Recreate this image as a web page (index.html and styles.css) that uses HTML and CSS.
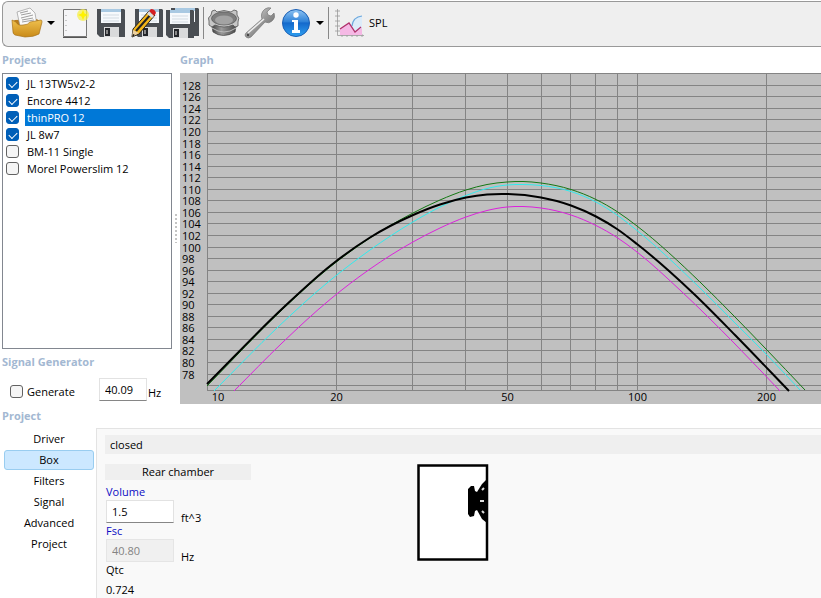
FILE: index.html
```
<!DOCTYPE html>
<html lang="en">

<head>
  <meta charset="UTF-8">
  <meta name="viewport" content="width=device-width">
  <title>Speaker projects</title>
  <link rel="stylesheet" href="styles.css">
</head>

<body>
  <header class="toolbar">
    <button class="tool" aria-label="Open">
      <svg width="34" height="32" viewBox="0 0 34 32">
        <defs>
          <linearGradient id="folder" x1="0" y1="0" x2="0" y2="1"><stop offset="0" stop-color="#efc04e"/><stop offset="1" stop-color="#c98a18"/></linearGradient>
          <linearGradient id="metal" x1="0" y1="0" x2="1" y2="1"><stop offset="0" stop-color="#eee"/><stop offset=".5" stop-color="#999"/><stop offset="1" stop-color="#555"/></linearGradient>
          <linearGradient id="blue" x1="0" y1="0" x2="0" y2="1"><stop offset="0" stop-color="#8fc4f2"/><stop offset=".45" stop-color="#2f82d8"/><stop offset=".5" stop-color="#1469cc"/><stop offset="1" stop-color="#2fa0f0"/></linearGradient>
          <linearGradient id="steel" x1="0" y1="0" x2="1" y2="0"><stop offset="0" stop-color="#3a3a3a"/><stop offset=".4" stop-color="#9a9a9a"/><stop offset="1" stop-color="#444"/></linearGradient>
        </defs>
        <path d="M5 13L3 14V26H29V14L27 12Z" fill="#b87c1c"/>
        <path d="M10 19L7 5L20 1L25 6L27 18Z" fill="#fafafa" stroke="#999" stroke-width=".7"/>
        <path d="M10 6L18 4M11 8L21 6M11 11L23 8M12 13L23 11M12 15L24 13" stroke="#888" stroke-width=".8"/>
        <path d="M2 13L6 15Q8 19 13 18Q18 18 20 15L31 13Q32 13 32 15L29 27Q24 30 15 30L5 28Q3 27 3 25Z" fill="url(#folder)" stroke="#a8731a" stroke-width=".7"/>
      </svg>
    </button>
    <button class="drop" aria-label="Recent files"></button>
    <button class="tool" aria-label="New">
      <svg width="30" height="32" viewBox="0 0 30 32">
        <path d="M3.500 2.500H26.500V29.500H3.500Z" fill="#f5f5f7" stroke="#777"/>
        <path d="M3 30.500H27" stroke="#555"/>
        <path d="M6 8v1M6 13v1M6 18v1M6 23v1" stroke="#999"/>
        <circle cx="23" cy="8" r="6" fill="#f6ef4c" opacity=".75"/>
        <path d="M23 3l1.500 3.500L28 8l-3.500 1.500L23 13l-1.500-3.500L18 8l3.500-1.500Z" fill="#fff200"/>
      </svg>
    </button>
    <button class="tool" aria-label="Save">
      <svg width="32" height="32" viewBox="0 0 32 32">
        <symbol id="disk" viewBox="0 0 28 30">
          <path d="M0 1H27L28 2V29H3L0 26Z" fill="#4a4e53"/>
          <path d="M4 1H24V15H4Z" fill="#f6f9fc"/>
          <path d="M4 1H24V4H4Z" fill="#a9c9e2"/>
          <path d="M6 7H22M6 10H22M6 13H22" stroke="#d3dbe2"/>
          <path d="M7 19H22V29H7Z" fill="#d9dadb"/>
          <path d="M8 20H13V28H8Z" fill="#24262a"/>
          <path d="M9 22H11V26H9Z" fill="#888"/>
        </symbol>
        <use href="#disk" x="2" y="1" width="28" height="30"/>
      </svg>
    </button>
    <button class="tool" aria-label="Save as">
      <svg width="36" height="32" viewBox="0 0 36 32">
        <use href="#disk" x="6" y="1" width="28" height="30"/>
        <path d="M3 30L4 22L20 4L26 8L10 27Z" fill="#f3b519" stroke="#222"/>
        <path d="M7 24L23 6" stroke="#222" stroke-width="2"/>
        <path d="M20 4L22 2Q26 2 27 6L25 9Z" fill="#d51f22"/>
        <path d="M18 7L20 4L25 9L23 11Z" fill="#ddd"/>
        <path d="M3 30L4 23L10 26Z" fill="#ecd0a0"/>
        <path d="M3 30L4 27L6 28Z" fill="#111"/>
      </svg>
    </button>
    <button class="tool" aria-label="Save all">
      <svg width="36" height="34" viewBox="0 0 36 34">
        <use href="#disk" x="6" y="1" width="28" height="30"/>
        <use href="#disk" x="1" y="3" width="28" height="30"/>
      </svg>
    </button>
    <span class="separator"></span>
    <button class="tool" aria-label="Drivers">
      <svg width="34" height="32" viewBox="0 0 34 32">
        <path d="M4 14L6 25Q16 32 28 25L30 14Z" fill="url(#steel)" stroke="#444" stroke-width=".7"/>
        <path d="M5 21Q17 29 29 21" fill="none" stroke="#bbb"/>
        <path d="M5 4L8 3L10 5Q17 2 24 5L27 3L30 4L30 8Q33 11 31 15L31 19L28 20L26 18Q17 22 8 18L5 20L2 18L2 14Q0 11 4 8Z" fill="#c6c6c6" stroke="#555" stroke-width=".8"/>
        <ellipse cx="17" cy="11.500" rx="12.500" ry="6.500" fill="#7e7e7e" stroke="#555" stroke-width=".7"/>
        <ellipse cx="17" cy="13" rx="9" ry="4.500" fill="#a3a3a3"/>
      </svg>
    </button>
    <button class="tool" aria-label="Settings">
      <svg width="34" height="34" viewBox="0 0 34 34">
        <path d="M3 27L19 13Q17 7 22 3Q25 1 28 2L24 6L25 9L28 10L31 7Q33 12 29 15Q26 18 22 16L8 31Q5 33 3 31Q1 29 3 27Z" fill="url(#metal)" stroke="#777" stroke-width=".7"/>
        <path d="M5 27L21 13" stroke="#eee" stroke-width="1.500"/>
        <circle cx="5" cy="29" r="1.200" fill="#444"/>
      </svg>
    </button>
    <button class="tool" aria-label="About">
      <svg width="34" height="32" viewBox="0 0 34 32">
        <circle cx="17" cy="16" r="13.500" fill="url(#blue)" stroke="#1b5fb4"/>
        <circle cx="17" cy="8" r="2.700" fill="#fff"/>
        <path d="M13 13H19V23H21V26H13V23H15V15H13Z" fill="#fff"/>
      </svg>
    </button>
    <button class="drop" aria-label="Help topics"></button>
    <span class="separator"></span>
    <button class="tool tool-text">
      <svg width="30" height="30" viewBox="0 0 30 30">
        <path d="M2.500 1V27.500H29M0 3h5M0 8h5M0 13h5M0 18h5M0 23h5M7 26v3M12 26v3M17 26v3M22 26v3M27 26v3" stroke="#999" fill="none" stroke-width=".8"/>
        <path d="M15 18Q17 9 27 8V21L21 24Z" fill="#dcecfa"/>
        <path d="M17 18Q18 9 27 8" fill="none" stroke="#6ba7dc" stroke-width="1.200"/>
        <path d="M5 21L14 15L20 24L27 20V27H5Z" fill="#f5b9e5"/>
        <path d="M5 21L14 15L20 24L26 19" fill="none" stroke="#b0306c" stroke-width="1.300"/>
      </svg>
      SPL
    </button>
  </header>

  <main class="workspace">
    <section class="sidebar">
      <h2 class="heading">Projects</h2>
      <ul class="project-list">
        <li><label><input type="checkbox" class="check" checked><span>JL 13TW5v2-2</span></label></li>
        <li><label><input type="checkbox" class="check" checked><span>Encore 4412</span></label></li>
        <li class="selected"><label><input type="checkbox" class="check" checked><span>thinPRO 12</span></label></li>
        <li><label><input type="checkbox" class="check" checked><span>JL 8w7</span></label></li>
        <li><label><input type="checkbox" class="check"><span>BM-11 Single</span></label></li>
        <li><label><input type="checkbox" class="check"><span>Morel Powerslim 12</span></label></li>
      </ul>
      <h2 class="heading">Signal Generator</h2>
      <div class="generator">
        <label class="generate"><input type="checkbox" class="check"><span>Generate</span></label>
        <input type="text" class="field" value="40.09" aria-label="Frequency">
        <span class="unit">Hz</span>
      </div>
    </section>
    <div class="splitter"></div>
    <section class="graph">
      <h2 class="heading">Graph</h2>
      <svg class="plot" id="plot" viewBox="0 0 641 331" role="img" aria-label="SPL graph"></svg>
    </section>
  </main>

  <section class="project">
    <h2 class="heading">Project</h2>
    <div class="project-body">
      <nav class="tabs">
        <button class="tab">Driver</button>
        <button class="tab active">Box</button>
        <button class="tab">Filters</button>
        <button class="tab">Signal</button>
        <button class="tab">Advanced</button>
        <button class="tab">Project</button>
      </nav>
      <div class="panel">
        <div class="box-type">closed</div>
        <div class="box-content">
          <div class="chamber">
            <h3 class="chamber-title">Rear chamber</h3>
            <label class="param" for="volume">Volume</label>
            <div class="param-row">
              <input type="text" class="field" id="volume" value="1.5">
              <span class="unit">ft^3</span>
            </div>
            <label class="param" for="fsc">Fsc</label>
            <div class="param-row">
              <input type="text" class="field" id="fsc" value="40.80" disabled>
              <span class="unit">Hz</span>
            </div>
            <div class="result">Qtc</div>
            <div class="result-value">0.724</div>
          </div>
          <svg class="enclosure" width="72" height="97" viewBox="0 0 72 97">
            <rect x="1.500" y="1.500" width="68.500" height="94" fill="#fff" stroke="#000" stroke-width="2.500"/>
            <path d="M54 22H57L58 27L60 28L65 20L70 15V59L65 55L60 46L58 47L57 52L53 53L51 50V25Z"/>
            <path d="M65 26l2-2M63 37l4 0M65 47l2 2" stroke="#ddd" stroke-width="2"/>
          </svg>
        </div>
      </div>
    </div>
  </section>
  <script src="plot.js"></script>
</body>

</html>
```
FILE: styles.css
```
* {
  box-sizing: border-box;
}

html,
body {
  margin: 0;
  height: 100%;
}

body {
  display: flex;
  flex-direction: column;
  overflow: hidden;
  background: #fff;
  color: #000;
  font-family: 'Open Sans', 'Noto Sans', sans-serif;
  font-size: 11px;
  line-height: 16px;
  --heading: #a3b8d2;
  --grey: #efefef;
  --link: #0c0cc4;
}

button,
input {
  font: inherit;
  color: inherit;
}

.toolbar {
  display: flex;
  align-items: center;
  flex: none;
  height: 46px;
  margin: 1px 0 0 2px;
  padding: 0 0 2px 6px;
  background: var(--grey);
  border: 1px solid #999;
  border-right: 0;
  border-radius: 6px 0 0 6px;
}

.tool {
  display: flex;
  align-items: center;
  justify-content: center;
  width: 36px;
  padding: 0;
  border: 0;
  background: none;
}

.tool-text {
  gap: 4px;
  width: auto;
  padding-left: 4px;
}

.drop {
  width: 12px;
  height: 30px;
  padding: 0;
  border: 0;
  background: none;
}

.drop::before {
  content: '';
  display: block;
  width: 0;
  margin: auto;
  border: 4px solid transparent;
  border-top-color: #000;
  border-bottom: 0;
}

.separator {
  width: 1px;
  height: 32px;
  margin: 0 2px;
  background: #888;
}

.heading {
  margin: 0;
  color: var(--heading);
  font-size: 11px;
  font-weight: 700;
  line-height: 16px;
}

.workspace {
  display: grid;
  grid-template-columns: 170px 8px 1fr;
  flex: none;
  padding: 5px 0 0 2px;
}

.sidebar,
.graph {
  display: flex;
  flex-direction: column;
}

.sidebar .heading,
.graph .heading {
  margin-bottom: 5px;
}

.project-list {
  flex: 1;
  margin: 0 0 5px;
  padding: 1px;
  list-style: none;
  border: 1px solid #828790;
}

.project-list label,
.generate {
  display: flex;
  align-items: center;
}

.project-list span {
  flex: 1;
  height: 17px;
  margin-left: 6px;
  padding-left: 2px;
  line-height: 17px;
}

.project-list .check {
  margin-left: 2px;
}

.selected span {
  background: #0078d7;
  color: #fff;
}

.check {
  appearance: none;
  display: grid;
  place-items: center;
  width: 13px;
  height: 13px;
  margin: 0;
  background: #f5f5f5;
  border: 1px solid #626262;
  border-radius: 3px;
}

.check:checked {
  background: #005fb8;
  border-color: #005fb8;
}

.check:checked::before {
  content: '';
  width: 7px;
  height: 4px;
  border: solid #fff;
  border-width: 0 0 1px 1px;
  transform: rotate(-45deg);
}

.generator {
  display: flex;
  align-items: center;
  height: 29px;
}

.generate {
  gap: 4px;
  width: 97px;
  padding: 4px 0 0 8px;
}

.field {
  width: 68px;
  height: 23px;
  padding: 0 5px 1px;
  background: #fff;
  border: 1px solid #e2e2e2;
  border-bottom-color: #868686;
}

.field:disabled {
  background: #f0f0f0;
  border-color: #e5e5e5;
  color: #838383;
}

.generator .field {
  width: 48px;
}

.generator .unit {
  padding: 6px 0 0 1px;
}

.splitter {
  align-self: center;
  height: 30px;
  margin: 0 2px;
  background: radial-gradient(circle, #c4c4c4 1px, transparent 1px) 0 0 / 4px 4px;
}

.plot {
  display: block;
  width: 100%;
  height: auto;
  overflow: visible;
  background: #c0c0c0;
}

.grid line {
  stroke: #848484;
}

.curve {
  fill: none;
  stroke-width: 1;
}

.curve.green {
  stroke: #147814;
}

.curve.cyan {
  stroke: #30ecee;
}

.curve.magenta {
  stroke: #dc22dc;
}

.curve.black {
  stroke: #000;
  stroke-width: 2;
}

.frequency {
  text-anchor: middle;
}

.project {
  display: flex;
  flex-direction: column;
  flex: 1;
  padding-top: 4px;
}

.project > .heading {
  margin-left: 2px;
}

.project-body {
  display: flex;
  flex: 1;
  margin-top: 4px;
}

.tabs {
  display: flex;
  flex-direction: column;
  gap: 1px;
  width: 96px;
  padding: 1px 2px 0 4px;
}

.tab {
  height: 20px;
  padding: 0;
  background: none;
  border: 1px solid transparent;
  border-radius: 3px;
  line-height: 16px;
}

.tab.active {
  background: #cce8ff;
  border-color: #99cdf0;
}

.panel {
  flex: 1;
  padding: 6px 0 0 8px;
  background: #f9f9f9;
  border: solid #e3e3e3;
  border-width: 1px 0 0 1px;
}

.box-type {
  padding: 1px 5px;
  background: var(--grey);
  line-height: 17px;
}

.box-content {
  display: flex;
  align-items: flex-start;
  gap: 166px;
  margin-top: 10px;
}

.chamber {
  width: 146px;
}

.chamber-title {
  margin: 0 0 4px;
  background: var(--grey);
  font-size: 11px;
  font-weight: 400;
  text-align: center;
}

.param {
  display: block;
  padding-left: 1px;
  color: var(--link);
}

.param-row {
  display: flex;
  gap: 7px;
  height: 23px;
  padding-left: 1px;
}

.param-row .unit {
  padding-top: 10px;
}

.result,
.result-value {
  padding-left: 1px;
}

.result-value {
  margin-top: 4px;
}
```
FILE: plot.js
```
const NS = 'http://www.w3.org/2000/svg';
const plot = document.getElementById('plot');

const LEFT = 27;
const RIGHT = 641;
const BOTTOM = 317;

const add = (parent, name, attrs, text) => {
  const el = document.createElementNS(NS, name);
  for (const key in attrs) el.setAttribute(key, attrs[key]);
  if (text !== undefined) el.textContent = text;
  parent.appendChild(el);
  return el;
};

const freqX = f => Math.floor(457 + 430 * Math.log10(f / 100)) + 0.5;
const levelY = db => Math.floor(12.3 + (128 - db) / 2 * 11.55) + 0.5;

const grid = add(plot, 'g', { class: 'grid' });
const hline = y => add(grid, 'line', { x1: LEFT, x2: RIGHT, y1: y, y2: y });

hline(0.5);
hline(BOTTOM + 0.5);
for (let db = 128; db >= 76; db -= 2) {
  hline(levelY(db));
  if (db > 76) add(plot, 'text', { x: 2, y: levelY(db) + 4 }, db);
}

[10, 20, 30, 40, 50, 60, 70, 80, 90, 100, 200].forEach(f => {
  add(grid, 'line', { x1: freqX(f), x2: freqX(f), y1: 0, y2: BOTTOM });
});

[10, 20, 50, 100, 200].forEach(f => {
  // keep the first label inside the plot area
  add(plot, 'text', { class: 'frequency', x: Math.max(freqX(f), 38), y: 328 }, f);
});

const curves = {
  green: [[27, 313], [104, 235], [150, 194], [190, 165], [232, 140.5], [260, 127], [286, 117], [307, 111.5], [327, 109], [343, 108.5], [361, 110], [391, 116.5], [416, 126.5], [437, 138.5], [457, 153], [520, 209], [555, 244], [586, 276], [625, 317]],
  cyan: [[34, 318], [98, 254], [150, 207.5], [190, 177], [232, 149.5], [260, 134], [286, 122.5], [307, 115.5], [327, 112], [343, 111.5], [361, 112.5], [391, 118.5], [416, 129], [437, 142], [457, 157.5], [520, 215], [555, 250], [586, 281], [620, 317]],
  magenta: [[54, 318], [102, 270], [150, 226.5], [190, 196], [232, 169.5], [260, 155], [286, 144], [307, 137.5], [327, 134], [343, 133.5], [361, 135], [391, 142], [416, 152.5], [437, 164.5], [457, 179], [501, 218], [555, 271], [600, 318]],
  black: [[27, 311], [104, 234], [150, 193], [190, 164.5], [232, 142.5], [260, 131.5], [286, 124.5], [307, 121.5], [327, 121], [361, 124.5], [391, 132.5], [416, 143.5], [437, 156], [457, 171], [514, 221], [555, 262], [609, 318]]
};

// tangent at a sample, weighted by the distance to its neighbours
const slope = (pts, i) => {
  const rise = k => (pts[k + 1][1] - pts[k][1]) / (pts[k + 1][0] - pts[k][0]);
  if (i === 0) return rise(0);
  if (i === pts.length - 1) return rise(i - 1);
  const before = pts[i][0] - pts[i - 1][0];
  const after = pts[i + 1][0] - pts[i][0];
  return (rise(i - 1) * after + rise(i) * before) / (before + after);
};

const smooth = pts => {
  let d = `M${pts[0]}`;
  for (let i = 0; i < pts.length - 1; i++) {
    const [x1, y1] = pts[i];
    const [x2, y2] = pts[i + 1];
    const step = (x2 - x1) / 3;
    d += `C${x1 + step},${y1 + step * slope(pts, i)} ${x2 - step},${y2 - step * slope(pts, i + 1)} ${x2},${y2}`;
  }
  return d;
};

for (const name in curves) {
  add(plot, 'path', { class: `curve ${name}`, d: smooth(curves[name]) });
}
```
